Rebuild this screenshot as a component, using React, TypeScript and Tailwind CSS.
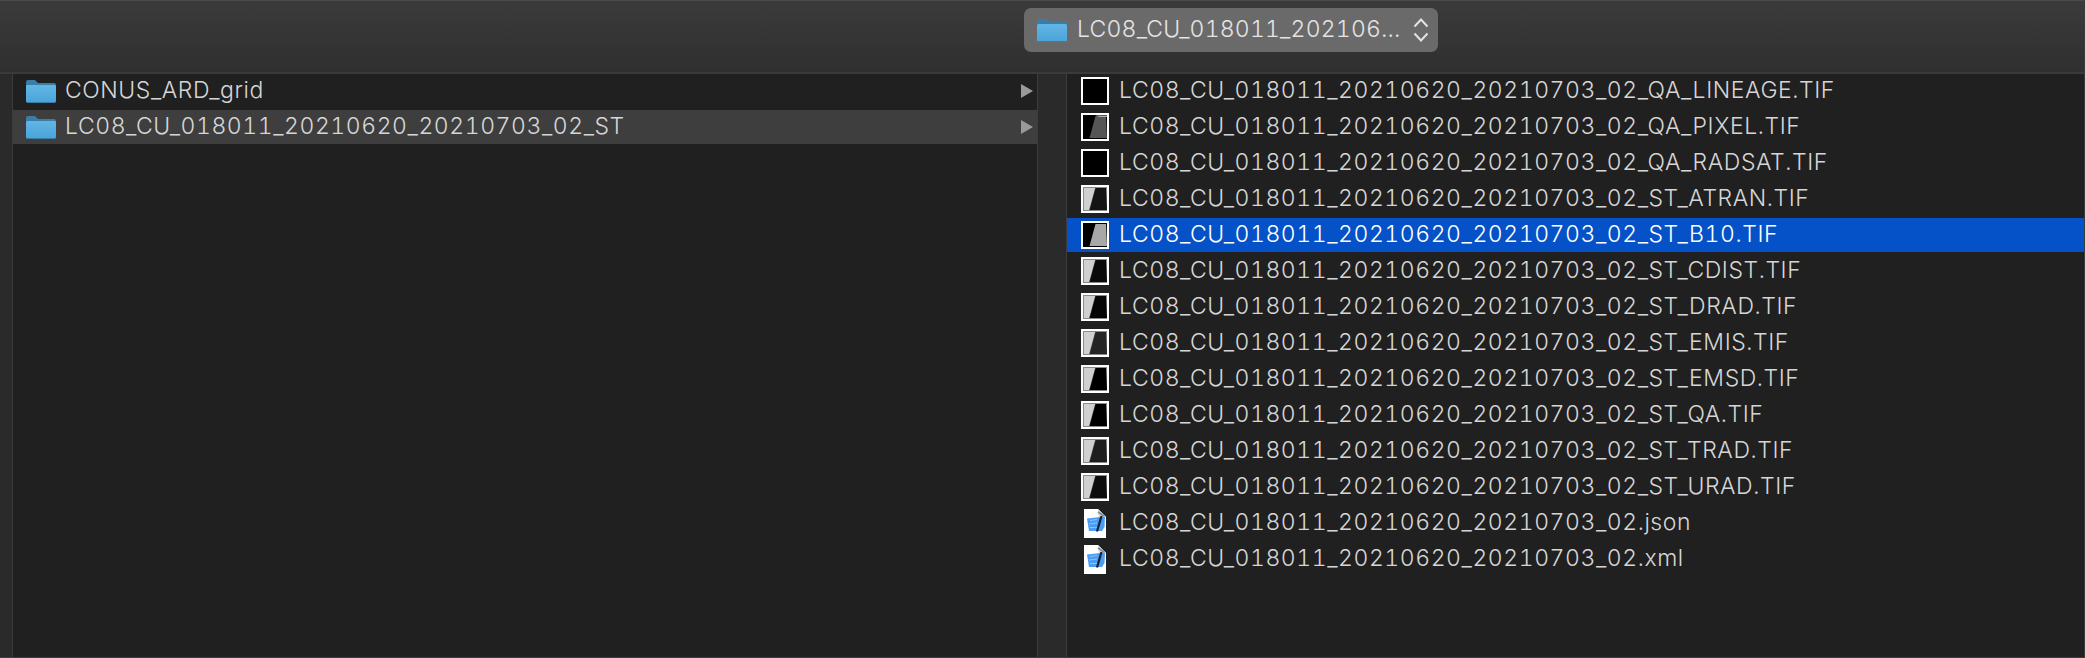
const leftRows = ["CONUS_ARD_grid", "LC08_CU_018011_20210620_20210703_02_ST"];
const base = "LC08_CU_018011_20210620_20210703_02";
type F = { name: string; l: string; r: string; edge?: string; streak?: boolean };
const files: F[] = [
  { name: "_QA_LINEAGE.TIF", l: "#000000", r: "#000000" },
  { name: "_QA_PIXEL.TIF", l: "#000000", r: "#565656", edge: "#000000", streak: true },
  { name: "_QA_RADSAT.TIF", l: "#000000", r: "#000000" },
  { name: "_ST_ATRAN.TIF", l: "#d0d0d0", r: "#141414", edge: "#8a8a8a" },
  { name: "_ST_B10.TIF", l: "#000000", r: "#a8a8a8", edge: "#000000" },
  { name: "_ST_CDIST.TIF", l: "#d0d0d0", r: "#0a0a0a", edge: "#8a8a8a" },
  { name: "_ST_DRAD.TIF", l: "#d0d0d0", r: "#060606", edge: "#8a8a8a" },
  { name: "_ST_EMIS.TIF", l: "#d0d0d0", r: "#242424", edge: "#8a8a8a" },
  { name: "_ST_EMSD.TIF", l: "#d0d0d0", r: "#000000", edge: "#8a8a8a" },
  { name: "_ST_QA.TIF", l: "#d0d0d0", r: "#000000", edge: "#8a8a8a" },
  { name: "_ST_TRAD.TIF", l: "#d0d0d0", r: "#1e1e1e", edge: "#8a8a8a" },
  { name: "_ST_URAD.TIF", l: "#d0d0d0", r: "#0c0c0c", edge: "#8a8a8a" },
];

function Folder() {
  return (
    <svg width="30" height="24" viewBox="0 0 30 24" className="shrink-0">
      <defs>
        <linearGradient id="fb" x1="0" y1="0" x2="0" y2="1">
          <stop offset="0" stopColor="#62b6e6" />
          <stop offset="1" stopColor="#4aa3d8" />
        </linearGradient>
      </defs>
      <path d="M0 3a2 2 0 0 1 2-2h7l3 3h16a2 2 0 0 1 2 2v6H0z" fill="#3a7ea8" />
      <path d="M0 7.5a1.5 1.5 0 0 1 1.5-1.5h27A1.5 1.5 0 0 1 30 7.500V22a2 2 0 0 1-2 2H2a2 2 0 0 1-2-2z" fill="url(#fb)" />
      <rect x="1" y="23" width="28" height="1" fill="#3a7ea8" />
    </svg>
  );
}

function Thumb({ l, r, edge, streak }: { l: string; r: string; edge?: string; streak?: boolean }) {
  return (
    <svg width="28" height="28" viewBox="0 0 28 28" className="shrink-0">
      <rect width="28" height="28" fill="#ffffff" />
      <rect x="2" y="2" width="24" height="24" fill={edge ?? "#000000"} />
      <path d="M3 3H14L8 25H3z" fill={l} />
      <path d="M14.500 3H25L26 25H8.500z" fill={r} />
      {streak && <path d="M15 2.500H26V4H19L17 3.500z" fill="#b0b0b0" />}
    </svg>
  );
}

function Doc() {
  return (
    <svg width="22" height="29" viewBox="0 0 22 29" className="shrink-0">
      <path d="M0 0H14L22 8V29H0z" fill="#ffffff" />
      <path d="M14 0L22 8H14.500z" fill="#dcdcdc" />
      <path d="M3 9.500L21 7.500L20.500 18L18 22H5z" fill="#4a9df5" />
      <path d="M6 11.500L13 10.500M5 15L13 14M6 18.500H13" stroke="#8cc4fa" strokeWidth="1" />
      <path d="M13 22.500L17.500 7" stroke="#18222e" strokeWidth="2.200" />
      <path d="M14 3L20 7" stroke="#7a8a9a" strokeWidth="1.600" />
    </svg>
  );
}

function Arrow() {
  return (
    <svg width="12" height="14" viewBox="0 0 12 14" className="shrink-0">
      <path d="M0 0L12 7L0 14z" fill="#9a9a9a" />
    </svg>
  );
}

export default function App() {
  return (
    <div
      className="w-[2085px] h-[658px] flex flex-col overflow-hidden bg-[#202020] border-b border-r border-[#3c3c3c] text-[23px] font-[350] tracking-[0.56px] tabular-nums leading-none text-[#d6d6d6]"
      style={{ fontFamily: "Inter, 'Noto Sans', sans-serif" }}
    >
      <header className="h-[74px] shrink-0 pl-[1024px] pt-[8px] bg-gradient-to-b from-[#3b3b3b] to-[#2f2f2f] border-t border-[#4a4a4a] border-b-2 border-b-[#3a3a3a]">
        <div className="w-[414px] h-[44px] -mt-px rounded-[7px] bg-[#6a6a6a] flex items-center pl-[13px] pr-[9px]">
          <Folder />
          <span className="ml-[10px] -mt-[2px] flex-1 whitespace-nowrap tracking-[0.2px] text-[#e4e4e4]">{base.slice(0, 21)}…</span>
          <svg width="16" height="26" viewBox="0 0 16 26" className="shrink-0">
            <path d="M1.500 9.500L8 2.500L14.500 9.500M1.500 16.500L8 23.500L14.500 16.500" stroke="#e2e2e2" strokeWidth="2" fill="none" />
          </svg>
        </div>
      </header>
      <div className="flex-1 flex min-h-0">
        <div className="w-[13px] shrink-0 bg-[#2a2a2a] border-r border-[#3c3c3c]" />
        <section className="w-[1024px] shrink-0 flex flex-col gap-[2px]">
          {leftRows.map((n, i) => (
            <div key={n} className={`h-[34px] flex items-center pl-[13px] pr-[4px] ${i === 1 ? "bg-[#3e3e3e]" : ""}`}>
              <Folder />
              <span className="ml-[9px] -mt-[2px] flex-1 whitespace-nowrap">{n}</span>
              <Arrow />
            </div>
          ))}
        </section>
        <div className="w-[30px] shrink-0 bg-[#2a2a2a] border-x border-[#3c3c3c]" />
        <section className="flex-1 flex flex-col gap-[2px]">
          {files.map((f) => {
            const sel = f.name === "_ST_B10.TIF";
            return (
              <div key={f.name} className={`h-[34px] flex items-center pl-[14px] ${sel ? "bg-[#0451c8] text-white" : ""}`}>
                <Thumb l={f.l} r={f.r} edge={f.edge} streak={f.streak} />
                <span className="ml-[10px] -mt-[2px] whitespace-nowrap">{base + f.name}</span>
              </div>
            );
          })}
          {[".json", ".xml"].map((e) => (
            <div key={e} className="h-[34px] flex items-center pl-[17px]">
              <Doc />
              <span className="ml-[13px] -mt-[2px] whitespace-nowrap">{base + e}</span>
            </div>
          ))}
        </section>
      </div>
    </div>
  );
}
